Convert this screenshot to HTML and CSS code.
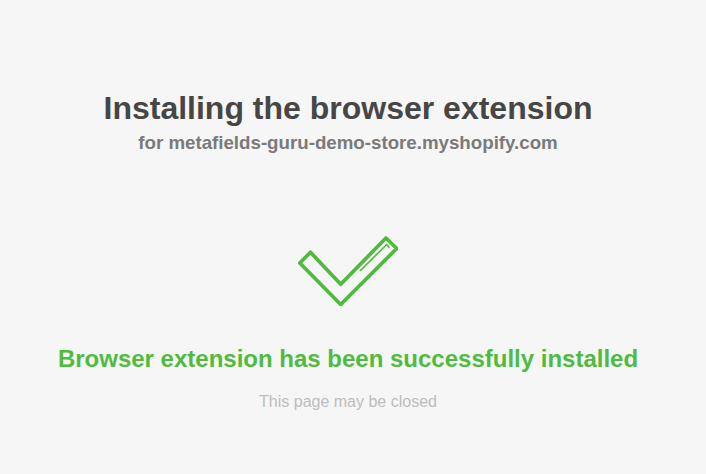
FILE: index.html
```html
<!DOCTYPE html>
<html lang="en">
<head>
    <meta charset="UTF-8">
    <meta name="viewport" content="width=device-width, initial-scale=1.0">
    <title>Installing the browser extension</title>
    <link rel="stylesheet" href="styles.css">
</head>
<body>

    <div class="header">
        <h1>Installing the browser extension</h1>
        <h2>for metafields-guru-demo-store.myshopify.com</h2>
    </div>

    <div class="status">
        <svg class="check" width="100" height="70" viewBox="0 0 100 70" fill="none" stroke="#50b93f" stroke-linejoin="round" stroke-linecap="round">
            <path d="M1.8 27 L12.5 16.3 L42.7 48.3 L88 2 L98.7 12.5 L42.7 68.5 Z" stroke-width="3.7"/>
            <path d="M62.5 34.5 L88.7 8.5 L91 11.5" stroke-width="1.6"/>
        </svg>
        <h3>Browser extension has been successfully installed</h3>
        <p>This page may be closed</p>
    </div>

</body>
</html>
```

FILE: styles.css
```css
body {
    font-family: "Liberation Sans", Arial, sans-serif;
    text-align: center;
    background-color: #f6f6f6;
    margin: 0;
    padding: 0 10px 0 0;
}

.header {
    padding-top: 90px;
}

.header h1 {
    font-size: 32px;
    line-height: 37px;
    margin: 0;
    color: #464646;
}

.header h2 {
    font-size: 18.72px;
    line-height: 22px;
    margin: 5px 0 0;
    color: #7a7a7a;
}

.status {
    margin-top: 82px;
}

.check {
    display: block;
    margin: 0 auto;
}

.status h3 {
    font-size: 24px;
    line-height: 28px;
    margin: 39px 0 0;
    color: #4fbb3f;
}

.status p {
    font-size: 16px;
    line-height: 20px;
    margin: 19px 0 0;
    color: #bdbdbd;
}
```
